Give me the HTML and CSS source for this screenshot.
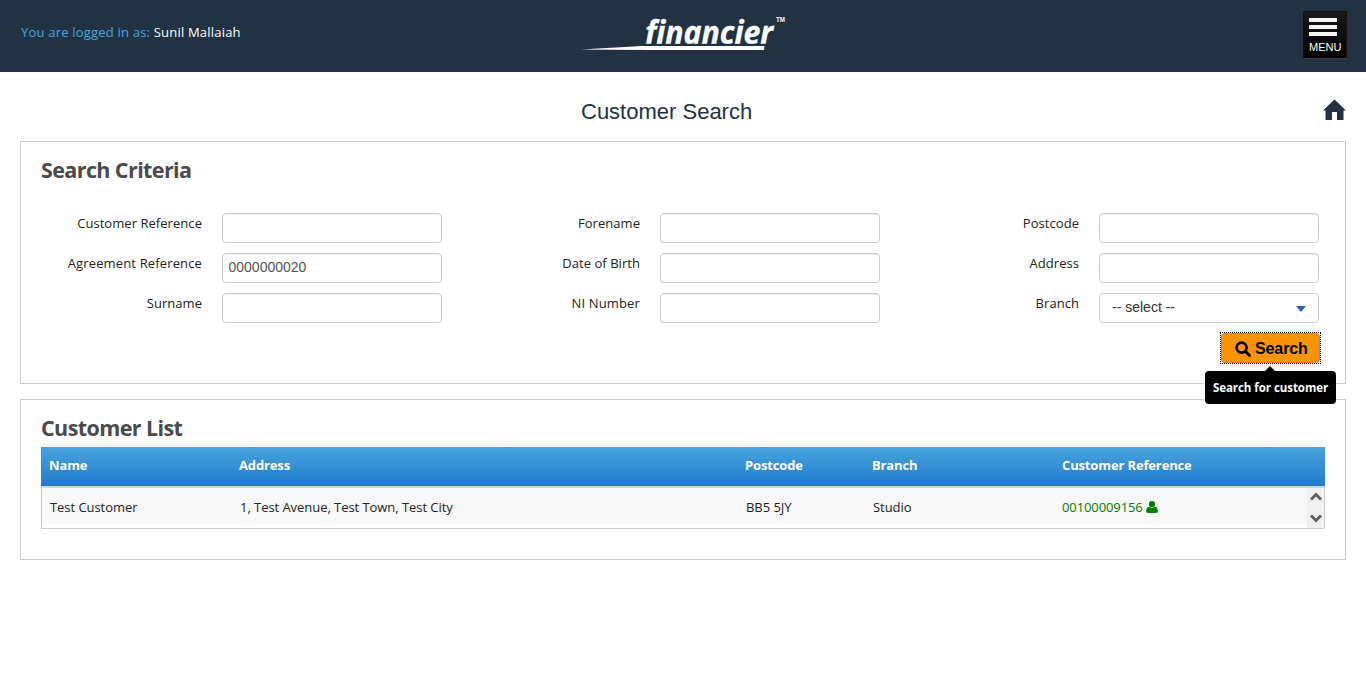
FILE: index.html
```html
<!DOCTYPE html>
<html lang="en">
<head>
<meta charset="utf-8">
<title>Customer Search</title>
<link rel="stylesheet" href="styles.css">
</head>
<body>
<header class="topbar">
  <p class="login"><span class="login-label">You are logged in as:</span> <span class="login-user">Sunil Mallaiah</span></p>
  <svg class="logo" width="206" height="40" viewBox="0 0 206 40">
    <clipPath id="above-baseline"><rect x="50" y="0" width="150" height="29.800"/></clipPath>
    <g clip-path="url(#above-baseline)"><text class="logo-text" x="63" y="29.500" textLength="128" lengthAdjust="spacingAndGlyphs">financier</text></g>
    <text class="logo-tm" x="194" y="8" textLength="9" lengthAdjust="spacingAndGlyphs">TM</text>
    <path d="M-1 35.500 L60 32 H182.500 L182 36 H70 L30 35.800 Z" fill="#fff"/>
  </svg>
  <button class="menu" type="button"><span class="bar"></span><span class="bar"></span><span class="bar"></span><span class="menu-text">MENU</span></button>
</header>
<main>
  <div class="title-row">
    <h1 class="title">Customer Search</h1>
    <svg class="home" width="24" height="22" viewBox="0 0 24 22"><path d="M12.500 0.500 L24 11.500 H21.500 V21 H15 V13 H10 V21 H3.500 V11.500 H1 Z" fill="#213343"/></svg>
  </div>
  <section class="panel criteria">
    <h2 class="heading">Search Criteria</h2>
    <div class="fields">
      <label class="field"><span class="label">Customer Reference</span><input class="box" type="text"></label>
      <label class="field"><span class="label">Forename</span><input class="box" type="text"></label>
      <label class="field"><span class="label">Postcode</span><input class="box" type="text"></label>
      <label class="field"><span class="label wide">Agreement Reference</span><input class="box" type="text" value="0000000020"></label>
      <label class="field"><span class="label">Date of Birth</span><input class="box" type="text"></label>
      <label class="field"><span class="label">Address</span><input class="box" type="text"></label>
      <label class="field"><span class="label">Surname</span><input class="box" type="text"></label>
      <label class="field"><span class="label wide">NI Number</span><input class="box" type="text"></label>
      <div class="field"><span class="label">Branch</span><div class="box select"><span>-- select --</span><svg width="10" height="6" viewBox="0 0 10 6"><path d="M0 0H10L5 6Z" fill="#2d5fb3"/></svg></div></div>
    </div>
    <div class="actions">
      <div class="focus"><button class="search" type="button"><svg width="16" height="16" viewBox="0 0 16 16"><circle cx="6.600" cy="6.600" r="5" fill="none" stroke="#000" stroke-width="2.600"/><path d="M10.300 10.300L14.500 14.500" stroke="#000" stroke-width="3" stroke-linecap="round"/></svg><span class="search-text">Search</span></button></div>
      <div class="tip">Search for customer</div>
    </div>
  </section>
  <section class="panel list">
    <h2 class="heading">Customer List</h2>
    <div class="row thead"><span>Name</span><span>Address</span><span>Postcode</span><span>Branch</span><span>Customer Reference</span></div>
    <div class="tbody">
      <div class="row trow"><span>Test Customer</span><span>1, Test Avenue, Test Town, Test City</span><span>BB5 5JY</span><span>Studio</span><span class="ref">00100009156 <svg class="person" width="12" height="12" viewBox="0 0 12 12"><circle cx="6" cy="3.200" r="3.100"/><path d="M3 5.800 Q6 8 9 5.800 Q11.900 6.500 11.900 10.200 Q11.800 12 10 12 H2 Q.2 12 .1 10.200 Q.1 6.500 3 5.800Z"/></svg></span></div>
      <div class="scroll">
        <svg width="12" height="9" viewBox="0 0 12 9"><path d="M1 7.500L6 2.500L11 7.500" fill="none" stroke="#606060" stroke-width="2.800"/></svg>
        <svg width="12" height="9" viewBox="0 0 12 9"><path d="M1 1.500L6 6.500L11 1.500" fill="none" stroke="#606060" stroke-width="2.800"/></svg>
      </div>
    </div>
  </section>
</main>
</body>
</html>
```
FILE: styles.css
```css
* { box-sizing: border-box; }
body { margin: 0; background: #fff; color: #222; font: 13px/20px "Open Sans", "Noto Sans", sans-serif; overflow: hidden; }
h1, h2, p { margin: 0; }
.topbar { height: 72px; background: #213343; display: grid; grid-template-columns: 560px 1fr 44px; padding: 0 19px 0 21px; align-items: start; }
.login { padding-top: 22px; white-space: nowrap; letter-spacing: .2px; }
.login-label { color: #45a5e0; }
.login-user { color: #fff; }
.logo { margin: 14px 0 0 1px; overflow: visible; }
.logo-text { font: italic 700 33px "Open Sans", sans-serif; fill: #fff; stroke: #fff; stroke-width: .4px; }
.logo-tm { font: 700 7px/1 "Liberation Sans", sans-serif; fill: #fff; }
.menu { margin: 11px 0 0; width: 44px; height: 48px; padding: 6px 0 0 5px; border: 1px solid #111; border-bottom-color: #33424e; background: linear-gradient(#1a1a1a, #000); display: flex; flex-direction: column; gap: 3px; }
.bar { width: 28px; height: 4px; flex: none; background: #f4f4f4; }
.menu-text { color: #fff; font: 11px/13px "Liberation Sans", sans-serif; margin: 2px 0 0; align-self: flex-start; }
main { padding: 0 20px; }
.title-row { height: 69px; display: flex; justify-content: space-between; padding-left: 561px; }
.title { font: 22px/26px "Liberation Sans", sans-serif; color: #213343; margin-top: 27px; }
.home { margin-top: 27px; }
.panel { border: 1px solid #ccc; padding: 0 20px; }
.criteria { height: 243px; }
.heading { font-size: 21.500px; line-height: 30px; height: 43px; font-weight: 700; color: #4a4a4a; padding-top: 13px; white-space: nowrap; letter-spacing: -.6px; }
.fields { display: grid; grid-template-columns: 438px 439px 438px; row-gap: 10px; margin-top: 28px; width: 1315px; }
.field { display: flex; gap: 20px; height: 30px; }
.label { width: 161px; text-align: right; white-space: nowrap; letter-spacing: .05px; }
.wide { letter-spacing: .14px; }
.box { width: 220px; height: 30px; border: 1px solid #ccc; border-radius: 4px; background: #fff; padding: 0 5.500px 2px; font: 14px "Liberation Sans", sans-serif; color: #555; box-shadow: inset 0 1px 1px rgba(0,0,0,.075); outline: 0; }
.select { display: flex; align-items: center; justify-content: space-between; padding: 0 12px 2px; color: #333; box-shadow: none; }
.select svg { margin-top: 4px; }
.actions { display: flex; justify-content: flex-end; margin-top: 10px; padding-right: 5px; position: relative; }
.focus { outline: 1px dotted #000; }
.search { width: 99px; height: 30px; border: 1px solid #e9752a; border-radius: 4px; background: #f99406; display: flex; align-items: center; padding: 1px 0 0 13px; gap: 4px; color: #000; }
.search-text { font: 700 16px/18px "Liberation Sans", sans-serif; letter-spacing: -.1px; padding-top: 1px; }
.tip { position: absolute; right: -11px; top: 38px; width: 131px; height: 33px; border-radius: 4px; background: #000; color: #fff; font-weight: 700; font-size: 11.500px; letter-spacing: -.05px; line-height: 33px; text-align: center; white-space: nowrap; }
.tip::before { content: ""; position: absolute; left: 60px; top: -5px; border: 5px solid transparent; border-top: 0; border-bottom-color: #000; }
.list { margin-top: 15px; height: 161px; }
.row { display: grid; grid-template-columns: 190px 506px 127px 190px 1fr; white-space: nowrap; }
.thead { margin-top: 4px; height: 39px; padding-left: 8px; line-height: 37px; color: #fff; font-weight: 700; letter-spacing: -.14px; background: linear-gradient(#48a4de, #227bca); }
.tbody { height: 43px; border: 1px solid #ccc; border-top: 2px solid #d5d5d5; display: flex; }
.trow { flex: 1; height: 36px; padding-left: 8px; line-height: 39px; letter-spacing: -.05px; background: #f8f8f8; }
.ref { color: green; margin-left: -1px; letter-spacing: -.1px; }
.person { fill: green; vertical-align: -1px; }
.scroll { width: 17px; background: #f0f0f0; display: flex; flex-direction: column; align-items: center; justify-content: space-between; padding: 4px 0 5px; }
```
